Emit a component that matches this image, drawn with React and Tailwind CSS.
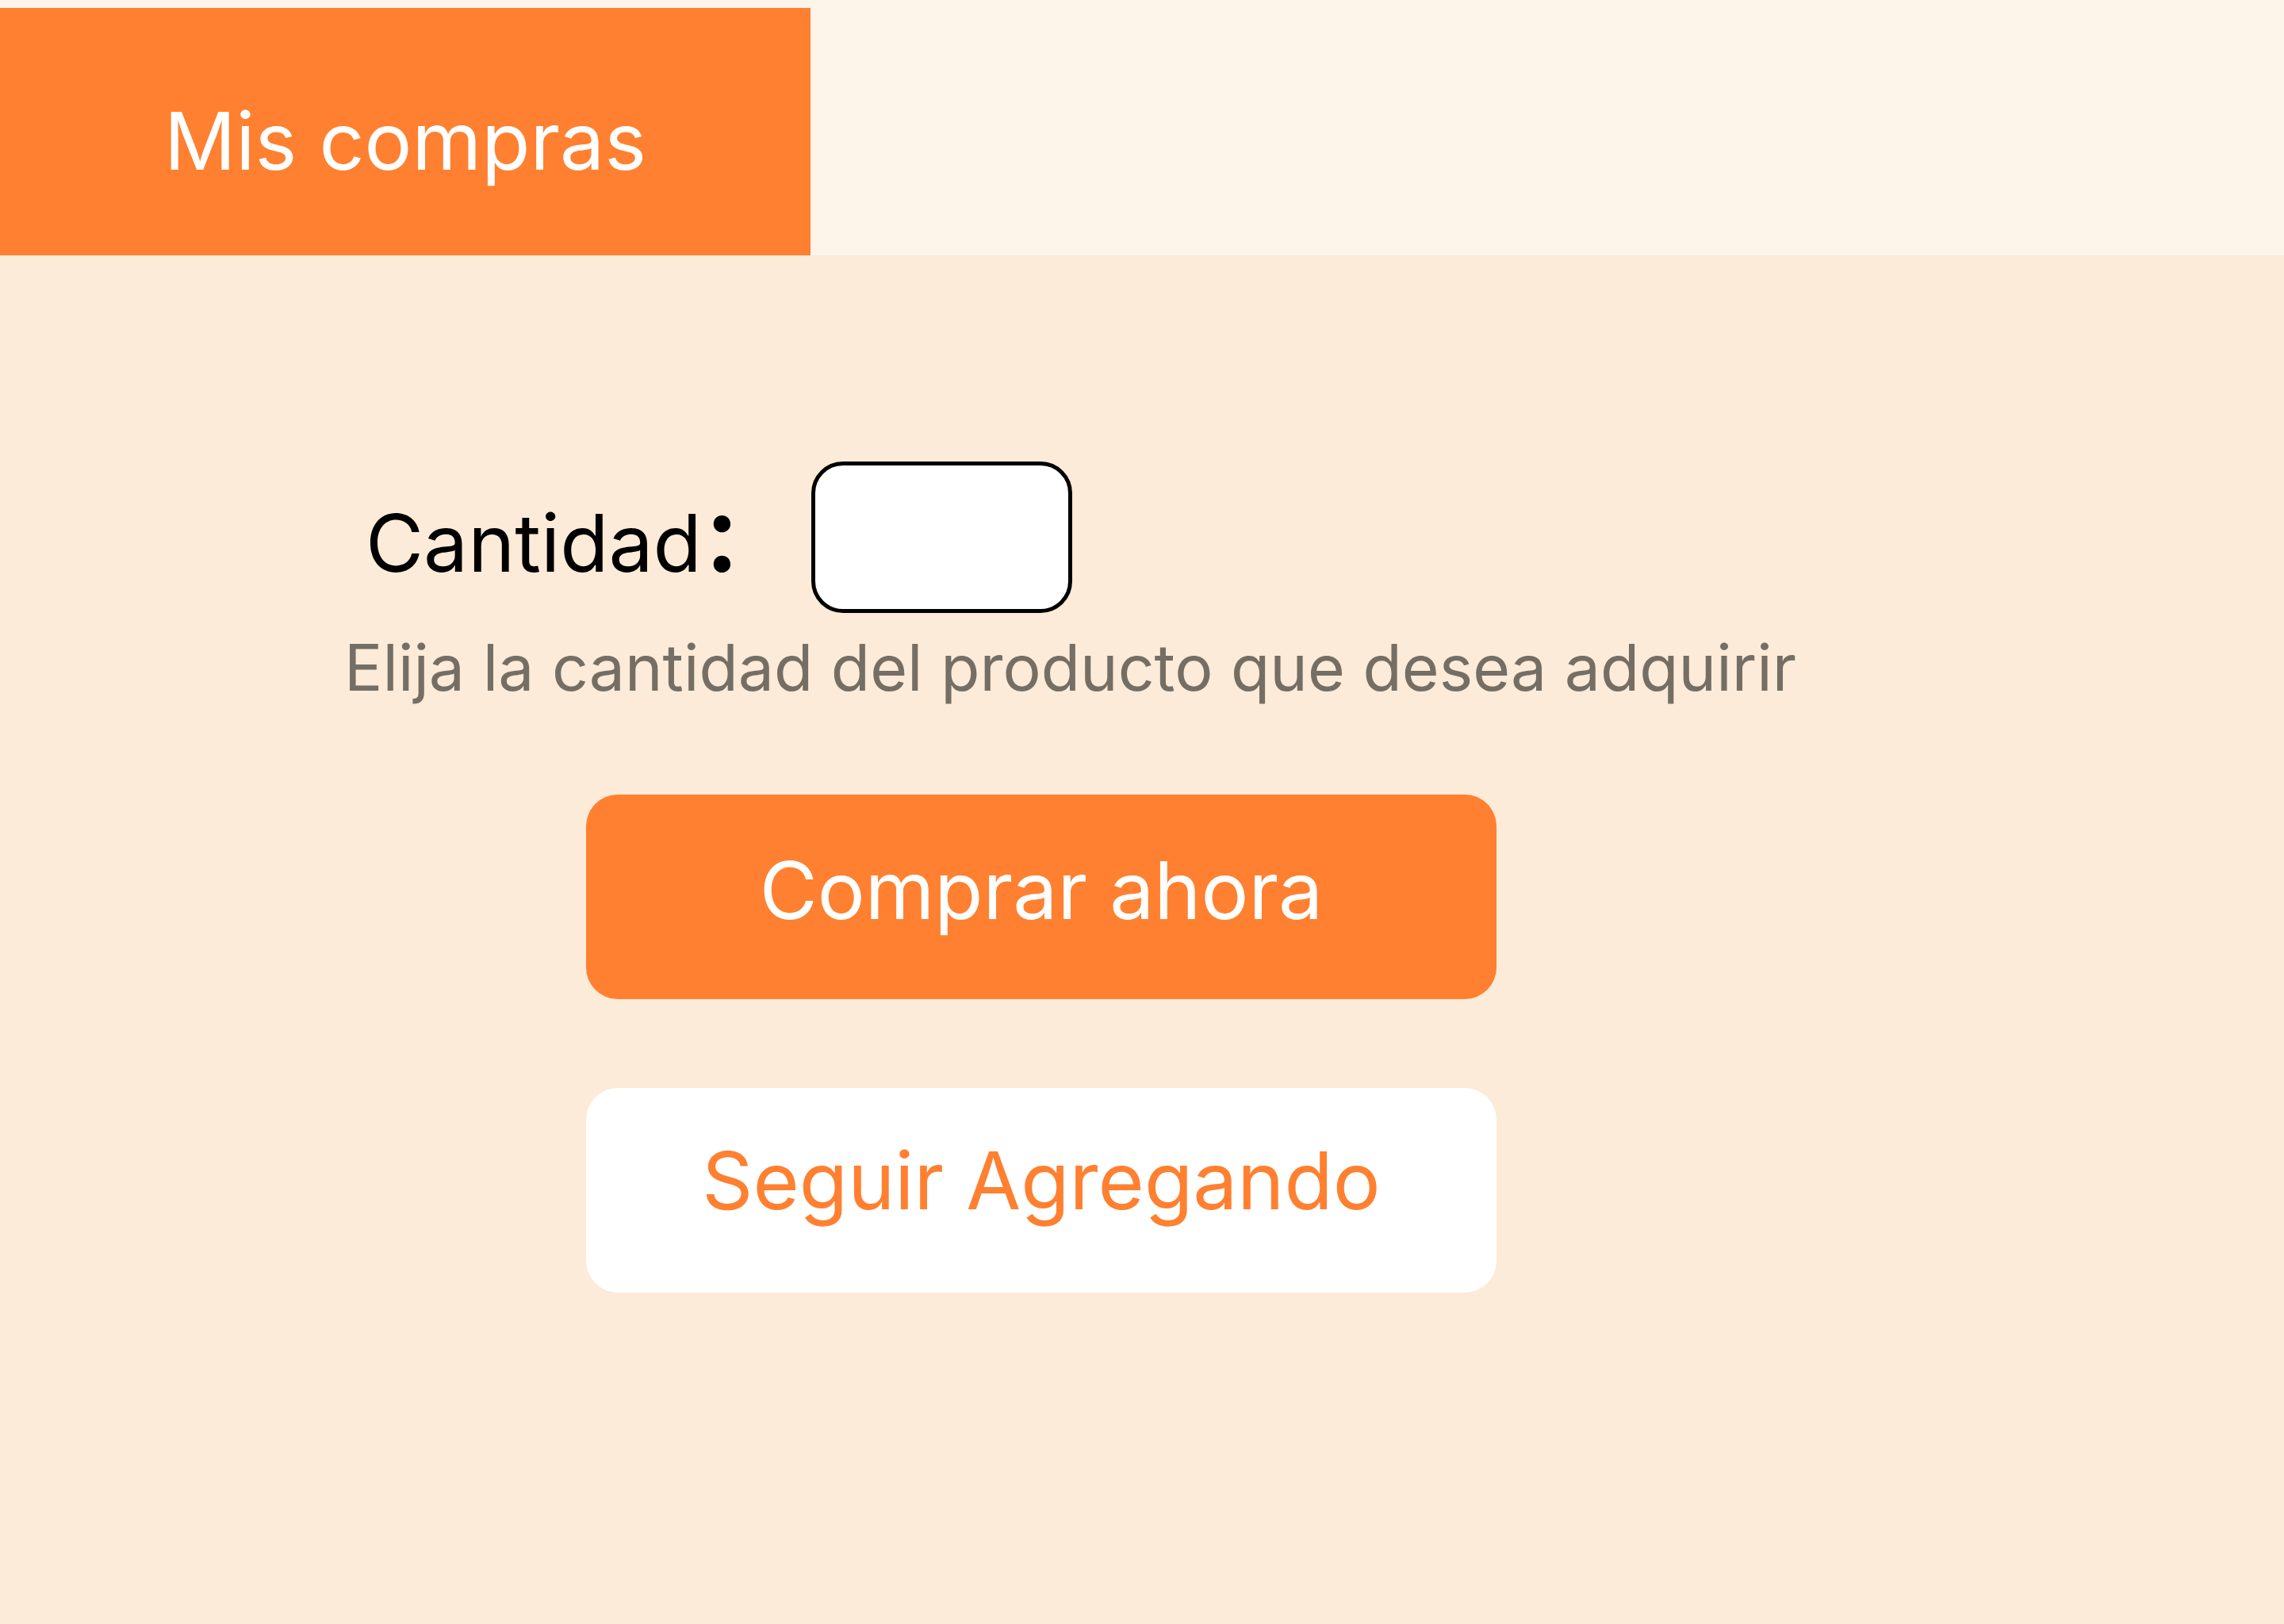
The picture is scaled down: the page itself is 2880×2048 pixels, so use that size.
export default function App() {
  return (
    <div
      className="min-h-screen w-full bg-[#fbebd8]"
      style={{ fontFamily: "Inter, 'Noto Sans', sans-serif" }}
    >
      <header className="h-[322px] bg-[#fdf4ea] pt-[10px]">
        <div className="flex h-[312px] w-[1022px] items-center justify-center bg-[#ff8030] pt-[24px] text-[100px] leading-none text-white">
          Mis compras
        </div>
      </header>
      <main className="flex flex-col items-start pt-[260px]">
        <div className="flex items-start pl-[461px]">
          <label className="mt-[22px] flex w-[562px] items-baseline text-[100px] text-black">
            <span>Cantidad</span>
            <span className="ml-[4px] text-[136px] font-semibold leading-none">:</span>
          </label>
          <input
            type="text"
            className="h-[191px] w-[329px] rounded-[40px] border-[5px] border-black bg-white px-6 text-[80px] outline-none"
          />
        </div>
        <p className="ml-[434px] mt-[9px] text-[80.5px] text-[#756e64]">
          Elija la cantidad del producto que desea adquirir
        </p>
        <button className="ml-[739px] mt-[99px] flex h-[258px] w-[1148px] items-center justify-center rounded-[40px] bg-[#ff8030] pb-[16px] text-[100px] text-white">
          Comprar ahora
        </button>
        <button className="ml-[739px] mt-[112px] flex h-[258px] w-[1148px] items-center justify-center rounded-[40px] bg-white pb-[24px] text-[100px] text-[#ff8030]">
          Seguir Agregando
        </button>
      </main>
    </div>
  );
}
